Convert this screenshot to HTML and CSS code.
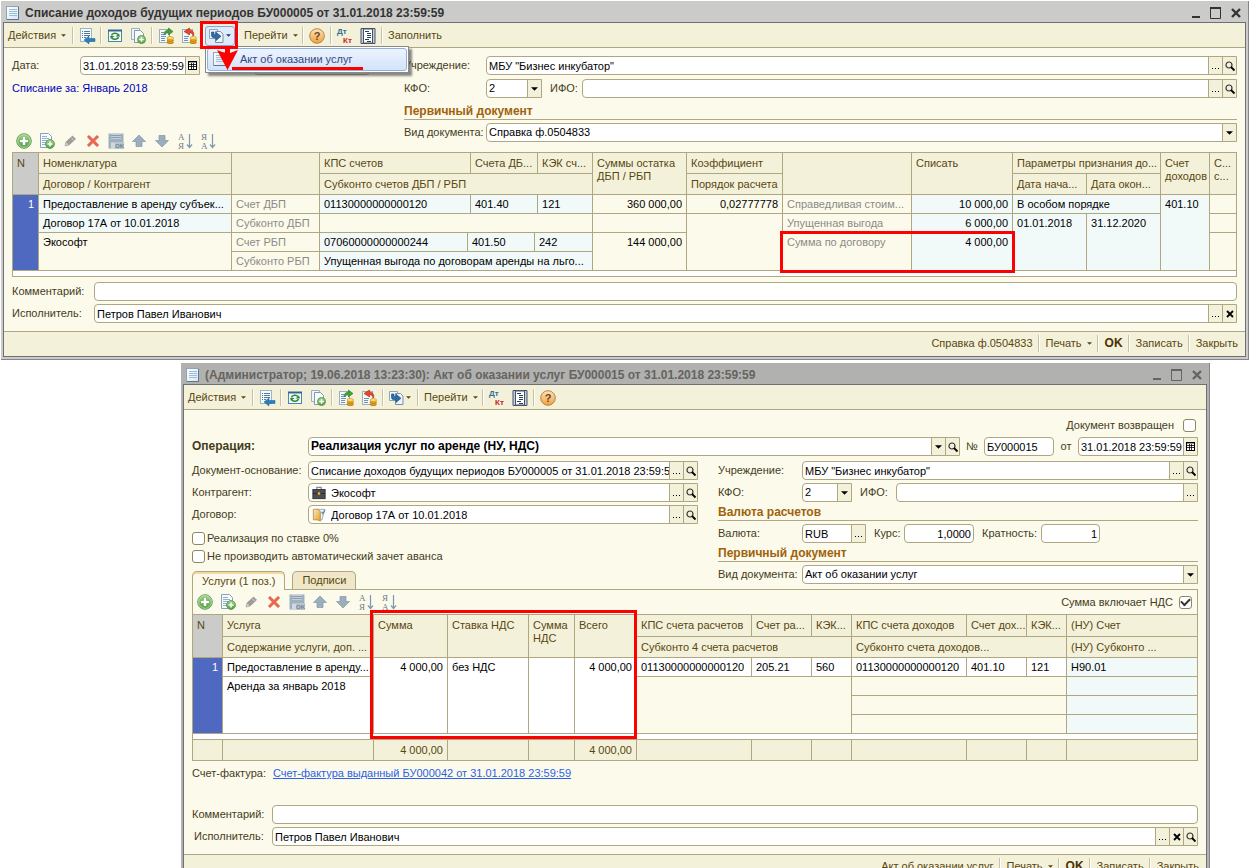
FILE: index.html
```html
<!DOCTYPE html>
<html lang="ru">
<head>
<meta charset="utf-8">
<title>Списание доходов будущих периодов</title>
<link rel="stylesheet" href="styles.css">
</head>
<body>
<svg class="sprite" aria-hidden="true">
  <defs>
    <linearGradient id="g-green" x1="0" y1="0" x2="0" y2="1"><stop offset="0" stop-color="#a5d68a"/><stop offset="1" stop-color="#4f9f3d"/></linearGradient>
    <linearGradient id="g-orange" x1="0" y1="0" x2="0" y2="1"><stop offset="0" stop-color="#fde3bd"/><stop offset="1" stop-color="#f0a040"/></linearGradient>
    <linearGradient id="g-sheet" x1="0" y1="0" x2="1" y2="1"><stop offset="0" stop-color="#ffffff"/><stop offset="1" stop-color="#d5e6f2"/></linearGradient>
    <linearGradient id="g-fold" x1="0" y1="0" x2="1" y2="1"><stop offset="0" stop-color="#fdeab5"/><stop offset="1" stop-color="#e0a030"/></linearGradient>
  </defs>
  <symbol id="doc" viewBox="0 0 14 14"><rect x=".5" y=".5" width="12" height="13" fill="url(#g-sheet)" stroke="#8fa6ba"/><path d="M3 3.5h8M3 5.5h8M3 7.5h8M3 9.5h8" stroke="#9dbdd8"/><path d="M12.5 1v12.5H1" fill="none" stroke="#5d7690"/></symbol>
  <symbol id="goto" viewBox="0 0 16 16"><rect x="1.500" y=".5" width="11" height="13" fill="#f5fafd" stroke="#9fb4c4"/><path d="M3 3.500h1M5 3.500h6M3 5.500h1M5 5.500h6M3 7.500h1M5 7.500h6M3 9.500h1M5 9.500h2" stroke="#54789a"/><path d="M16 10.500v3h-6V16l-5-4 5-4v2.500z" fill="#2c7fb8" stroke="#1c5f92" stroke-width=".5"/></symbol>
  <symbol id="refresh" viewBox="0 0 16 16"><rect x="1.500" y="2.500" width="13" height="11" fill="#f4f9fc" stroke="#5383a6"/><path d="M1 2.500h14" stroke="#33678f" stroke-width="2"/><path d="M4.500 7.500a3.600 2.800 0 0 1 6.500-1M11.500 9a3.600 2.800 0 0 1-6.500 1" fill="none" stroke="#2f8a35" stroke-width="1.600"/><path d="M13 8.500H8.500L12 5.500zM3 8h4.500L4 11z" fill="#2f8a35"/></symbol>
  <symbol id="copy" viewBox="0 0 16 16"><path d="M1.500.5h8v11h-8z" fill="#eef4f8" stroke="#9cb0bf"/><path d="M4.500 2.500h6l3 3v9h-9z" fill="#f8fbfd" stroke="#8399aa"/><circle cx="11.500" cy="11.500" r="4" fill="url(#g-green)" stroke="#5f9c55"/><path d="M11.500 9.200v4.600M9.200 11.500h4.600" stroke="#fff" stroke-width="1.500"/></symbol>
  <symbol id="post" viewBox="0 0 16 16"><rect x="1.500" y="1.500" width="10" height="13" fill="#f4f8fb" stroke="#9aafc0"/><path d="M3 4.500h3M3 6.500h5M3 8.500h5M3 10.500h4M3 12.500h4" stroke="#7093b2"/><path d="M6 6.500C6 3.500 8 2 10.500 2V0L15 3.500 10.500 7V5C9 5 7.500 5.200 6 6.500z" fill="#42a038" stroke="#2a7b25" stroke-width=".6"/><path d="M9 10v4.500c0 2 6.500 2 6.500 0V10z" fill="#e9a922"/><path d="M9 12c0 1.800 6.500 1.800 6.500 0M9 14c0 1.800 6.500 1.800 6.500 0" fill="none" stroke="#a96f0a" stroke-width=".8"/><ellipse cx="12.250" cy="10" rx="3.250" ry="1.500" fill="#ffe07a" stroke="#c18a16" stroke-width=".6"/></symbol>
  <symbol id="unpost" viewBox="0 0 16 16"><rect x="1.500" y="1.500" width="10" height="13" fill="#f4f8fb" stroke="#9aafc0"/><path d="M3 8.500h5M3 10.500h4M3 12.500h4" stroke="#7093b2"/><path d="M12.500 8C13.500 4 11.500 2.300 8.500 2.300V0L3 3.500 8.500 7V4.800c2 0 3.300.7 4 3.200z" fill="#e5452e" stroke="#b52413" stroke-width=".6"/><path d="M9 10v4.500c0 2 6.500 2 6.500 0V10z" fill="#e9a922"/><path d="M9 12c0 1.800 6.500 1.800 6.500 0M9 14c0 1.800 6.500 1.800 6.500 0" fill="none" stroke="#a96f0a" stroke-width=".8"/><ellipse cx="12.250" cy="10" rx="3.250" ry="1.500" fill="#ffe07a" stroke="#c18a16" stroke-width=".6"/></symbol>
  <symbol id="based" viewBox="0 0 16 16"><path d="M1.500 1.500h8v9h-8z" fill="#f2f7fb" stroke="#8fa5b8"/><path d="M7.500 3.500h5l2.500 2.500v8.500H7.500z" fill="#eef4fa" stroke="#7890a6"/><path d="M3.500 4v3.500c0 1.800 1.500 2.500 4.500 2.500v2.500l5-4.200L8 4.300v2.500c-1.500 0-2-.3-2-1V4z" fill="#2d6ea8" stroke="#174a7c" stroke-width=".6"/></symbol>
  <symbol id="help" viewBox="0 0 16 16"><circle cx="8" cy="8" r="7.300" fill="url(#g-orange)" stroke="#b9853f"/><text x="8" y="12" text-anchor="middle" class="ic-q">?</text></symbol>
  <symbol id="dtkt" viewBox="0 0 16 16"><text x="0" y="6" class="ic-dt">Дт</text><text x="6" y="15" class="ic-kt">Кт</text></symbol>
  <symbol id="report" viewBox="0 0 16 16"><path d="M1 .5h14v15H1z" fill="#c5cfda" stroke="#45536a"/><path d="M3.500 1v14h9V1z" fill="#fff" stroke="#45536a"/><path d="M5 3.500h4M7 5.500h4M7 7.500h4M7 9.500h4M5 11.500h4M7 13.500h4" stroke="#26405e"/></symbol>
  <symbol id="add" viewBox="0 0 16 16"><circle cx="8" cy="8" r="7.300" fill="url(#g-green)" stroke="#6d9f65"/><circle cx="8" cy="8" r="6.300" fill="none" stroke="#c6e6b6" stroke-width=".7"/><path d="M8 4v8M4 8h8" stroke="#5a9a4c" stroke-width="4"/><path d="M8 4v8M4 8h8" stroke="#fff" stroke-width="2.600"/></symbol>
  <symbol id="adddoc" viewBox="0 0 16 16"><path d="M1.500.5h8l3 3v11h-11z" fill="#f6fafd" stroke="#8ba2b5"/><path d="M3 3.500h5M3 5.500h7M3 7.500h5M3 9.500h4M3 11.500h4" stroke="#8fb2cf"/><circle cx="11" cy="11" r="4.400" fill="url(#g-green)" stroke="#5f9c55"/><path d="M11 8.500v5M8.500 11h5" stroke="#fff" stroke-width="1.600"/></symbol>
  <symbol id="pencil" viewBox="0 0 16 16"><path d="M3 13l1-4 6.500-6 3 3L7 12z" fill="#9d9d99" stroke="#83837f" stroke-width=".6"/><path d="M3 13l1-4 3 3z" fill="#c9c9c4"/><path d="M9 4.500l3 3" stroke="#d6d6d2"/></symbol>
  <symbol id="del" viewBox="0 0 16 16"><path d="M4 2.500l4 4 4-4 1.500 1.500-4 4 4 4-1.500 1.500-4-4-4 4L2.500 12l4-4-4-4z" fill="#ee6a50" stroke="#d8402c" stroke-width=".8"/></symbol>
  <symbol id="saveok" viewBox="0 0 16 16"><path d="M.5.5h15v15H.5z" fill="#9fb0be"/><path d="M3 1h10v5H3z" fill="#c4d0d9"/><path d="M3 2.500h10M3 4.500h10" stroke="#8b9eae"/><path d="M3 9.500h4V15H3z" fill="#cfd9e0"/><rect x="7" y="9" width="9" height="7" fill="#b9c5ce"/><text x="7" y="15" class="ic-ok">OK</text></symbol>
  <symbol id="up" viewBox="0 0 16 16"><path d="M8 2l6.500 6.500H11V13.500H5V8.500H1.500z" fill="#9caebd" stroke="#8397a8" stroke-width=".7"/></symbol>
  <symbol id="down" viewBox="0 0 16 16"><path d="M8 14l6.500-6.500H11V2.500H5v5H1.500z" fill="#9caebd" stroke="#8397a8" stroke-width=".7"/></symbol>
  <symbol id="az" viewBox="0 0 16 16"><text x="1" y="7" class="ic-s">А</text><text x="1" y="16" class="ic-s">Я</text><path d="M12.500 1v13M10 11.500l2.500 3 2.500-3" fill="none" stroke="#7f98ad" stroke-width="1.200"/></symbol>
  <symbol id="za" viewBox="0 0 16 16"><text x="1" y="7" class="ic-s">Я</text><text x="1" y="16" class="ic-s">А</text><path d="M12.500 1v13M10 11.500l2.500 3 2.500-3" fill="none" stroke="#7f98ad" stroke-width="1.200"/></symbol>
  <symbol id="lens" viewBox="0 0 10 10"><circle cx="4" cy="4" r="3" fill="none" stroke="#333" stroke-width="1.200"/><path d="M6 6l3.500 3.500" stroke="#000" stroke-width="1.800"/></symbol>
  <symbol id="cal" viewBox="0 0 9 9"><rect x=".5" y=".5" width="8" height="8" fill="#fff" stroke="#000"/><path d="M0 1h9M1 3.500h7M1 5.500h7M3.500 2v7M5.500 2v7" stroke="#000" stroke-width=".8"/></symbol>
  <symbol id="cross" viewBox="0 0 8 8"><path d="M1 1l6 6M7 1L1 7" stroke="#000" stroke-width="1.800"/></symbol>
  <symbol id="dots" viewBox="0 0 8 8"><path d="M0 6.500h1M3 6.500h1M6 6.500h1" stroke="#000"/></symbol>
  <symbol id="tri" viewBox="0 0 8 4"><path d="M0 0h8L4 4z" fill="currentColor"/></symbol>
  <symbol id="case" viewBox="0 0 16 16"><path d="M5.500 4V1.500h5V4" fill="none" stroke="#8a8a86" stroke-width="1.400"/><rect x="1" y="4" width="14" height="10.500" fill="#4d4e52" stroke="#2c2d30"/><path d="M1 8.500h14" stroke="#2a2a2c"/><path d="M8 6.500l1.800 2L8 10.500l-1.800-2z" fill="#f4ae34"/></symbol>
  <symbol id="folder" viewBox="0 0 16 16"><path d="M5.500 1.500h9l-3 12h-6z" fill="#e7eff7" stroke="#8fa6bf"/><path d="M11 4.500l1.500 2L15 2" fill="none" stroke="#5a7da8" stroke-width="1.200"/><path d="M1.500 1.500h5l3 2.500v11l-3-1.500h-5z" fill="url(#g-fold)" stroke="#c18e34"/></symbol>
  <symbol id="min" viewBox="0 0 12 12"><path d="M2 10h8" stroke="currentColor" stroke-width="2"/></symbol>
  <symbol id="max" viewBox="0 0 12 12"><path d="M.5 1v10.500h10V1" fill="none" stroke="currentColor"/><path d="M0 1h11" stroke="currentColor" stroke-width="2"/></symbol>
  <symbol id="close" viewBox="0 0 12 12"><path d="M2 2l8 8M10 2l-8 8" stroke="currentColor" stroke-width="2.400"/></symbol>
</svg>

<section class="win">
  <header class="title">
    <svg class="i14"><use href="#doc"/></svg>
    <h1>Списание доходов будущих периодов БУ000005 от 31.01.2018 23:59:59</h1>
    <button aria-label="Свернуть"><svg class="i12"><use href="#min"/></svg></button>
    <button aria-label="Развернуть"><svg class="i12"><use href="#max"/></svg></button>
    <button aria-label="Закрыть окно"><svg class="i12"><use href="#close"/></svg></button>
  </header>
  <nav class="bar">
    <button class="word first">Действия<svg class="caret"><use href="#tri"/></svg></button><i class="sep"></i>
    <button class="ib" aria-label="Найти в списке"><svg class="i16"><use href="#goto"/></svg></button><i class="sep"></i>
    <button class="ib" aria-label="Обновить"><svg class="i16"><use href="#refresh"/></svg></button>
    <button class="ib" aria-label="Скопировать"><svg class="i16"><use href="#copy"/></svg></button><i class="sep"></i>
    <button class="ib" aria-label="Провести"><svg class="i16"><use href="#post"/></svg></button>
    <button class="ib" aria-label="Отмена проведения"><svg class="i16"><use href="#unpost"/></svg></button><i class="sep"></i>
    <div class="split">
      <button class="ib wide active" aria-label="Ввести на основании"><svg class="i16"><use href="#based"/></svg><svg class="caret"><use href="#tri"/></svg></button>
      <div class="menu"><button class="item"><svg class="i14"><use href="#doc"/></svg>Акт об оказании услуг</button></div>
      <span class="mark mark-split"></span>
      <svg class="arrow" viewBox="0 0 22 24"><path d="M8 0h5v6l8-3L10.500 23 0 3l8 3z" fill="#f00"/></svg>
      <span class="underline"></span>
    </div><i class="sep"></i>
    <button class="word">Перейти<svg class="caret"><use href="#tri"/></svg></button><i class="sep"></i>
    <button class="ib" aria-label="Справка"><svg class="i16"><use href="#help"/></svg></button><i class="sep"></i>
    <button class="ib" aria-label="Проводки"><svg class="i16"><use href="#dtkt"/></svg></button>
    <button class="ib" aria-label="Отчет"><svg class="i16"><use href="#report"/></svg></button><i class="sep"></i>
    <button class="word">Заполнить</button>
  </nav>
  <div class="body">
    <div class="cols-a">
      <div>
        <div class="row">
          <label class="l68" for="a-date">Дата:</label>
          <div class="field w120"><input id="a-date" value="31.01.2018 23:59:59"><button aria-label="Календарь"><svg class="i9"><use href="#cal"/></svg></button></div>
          <label class="l54" for="a-num">Номер:</label>
          <div class="field solo w116"><input id="a-num"></div>
        </div>
        <div class="row period">Списание за: Январь 2018</div>
        <div class="icons spaced">
          <button class="ib" aria-label="Добавить"><svg class="i16"><use href="#add"/></svg></button>
          <button class="ib" aria-label="Добавить копированием"><svg class="i16"><use href="#adddoc"/></svg></button>
          <button class="ib" aria-label="Изменить"><svg class="i16"><use href="#pencil"/></svg></button>
          <button class="ib" aria-label="Удалить"><svg class="i16"><use href="#del"/></svg></button>
          <button class="ib" aria-label="Закончить редактирование"><svg class="i16"><use href="#saveok"/></svg></button>
          <button class="ib" aria-label="Вверх"><svg class="i16"><use href="#up"/></svg></button>
          <button class="ib" aria-label="Вниз"><svg class="i16"><use href="#down"/></svg></button>
          <button class="ib" aria-label="По возрастанию"><svg class="i16"><use href="#az"/></svg></button>
          <button class="ib" aria-label="По убыванию"><svg class="i16"><use href="#za"/></svg></button>
        </div>
      </div>
      <div>
        <div class="row">
          <label class="l82" for="a-org">Учреждение:</label>
          <div class="field grow"><input id="a-org" value="МБУ &quot;Бизнес инкубатор&quot;"><button aria-label="Выбрать"><svg class="i8"><use href="#dots"/></svg></button><button aria-label="Открыть"><svg class="i10"><use href="#lens"/></svg></button></div>
        </div>
        <div class="row">
          <label class="l82" for="a-kfo">КФО:</label>
          <div class="field w56"><select id="a-kfo"><option>2</option></select><span class="cap"><svg class="tri"><use href="#tri"/></svg></span></div>
          <label class="l40" for="a-ifo">ИФО:</label>
          <div class="field grow"><input id="a-ifo"><button aria-label="Выбрать"><svg class="i8"><use href="#dots"/></svg></button><button aria-label="Открыть"><svg class="i10"><use href="#lens"/></svg></button></div>
        </div>
        <h2>Первичный документ</h2>
        <div class="row">
          <label class="l82" for="a-kind">Вид документа:</label>
          <div class="field grow"><select id="a-kind"><option>Справка ф.0504833</option></select><span class="cap"><svg class="tri"><use href="#tri"/></svg></span></div>
        </div>
      </div>
    </div>
    <div class="sheet sheet-a">
      <table>
        <colgroup><col class="c26"><col class="c193"><col class="c88"><col class="c148"><col class="c3"><col class="c64"><col class="c3"><col class="c55"><col class="c94"><col class="c96"><col class="c129"><col class="c101"><col class="c74"><col class="c74"><col class="c49"><col class="c26"></colgroup>
        <thead>
          <tr><th rowspan="2" class="n">N</th><th>Номенклатура</th><th rowspan="2"></th><th colspan="2">КПС счетов</th><th colspan="2">Счета ДБ...</th><th>КЭК сч...</th><th rowspan="2">Суммы остатка<br>ДБП / РБП</th><th>Коэффициент</th><th rowspan="2"></th><th rowspan="2">Списать</th><th colspan="2">Параметры признания до...</th><th rowspan="2">Счет<br>доходов</th><th rowspan="2">С...<br>с...</th></tr>
          <tr><th>Договор / Контрагент</th><th colspan="5">Субконто счетов ДБП / РБП</th><th>Порядок расчета</th><th>Дата нача...</th><th>Дата окон...</th></tr>
        </thead>
        <tbody>
          <tr><td rowspan="4" class="sel">1</td><td class="b">Предоставление в аренду субъек...</td><td class="g">Счет ДБП</td><td colspan="2" class="b">01130000000000120</td><td colspan="2" class="b">401.40</td><td class="b">121</td><td class="r">360 000,00</td><td class="r">0,02777778</td><td class="g">Справедливая стоим...</td><td class="b r">10 000,00</td><td colspan="2" class="b">В особом порядке</td><td rowspan="4" class="b">401.10</td><td></td></tr>
          <tr><td class="b">Договор 17А от 10.01.2018</td><td class="g">Субконто ДБП</td><td colspan="5"></td><td></td><td rowspan="3"></td><td class="g">Упущенная выгода</td><td class="b r">6 000,00</td><td rowspan="3" class="b">01.01.2018</td><td rowspan="3" class="b">31.12.2020</td><td></td></tr>
          <tr><td rowspan="2">Экософт</td><td class="g">Счет РБП</td><td class="b">07060000000000244</td><td colspan="2" class="b">401.50</td><td colspan="2" class="b">242</td><td rowspan="2" class="r">144 000,00</td><td rowspan="2" class="g">Сумма по договору</td><td rowspan="2" class="b r">4 000,00</td><td rowspan="2"></td></tr>
          <tr><td class="g">Субконто РБП</td><td colspan="5" class="b">Упущенная выгода по договорам аренды на льго...</td></tr>
        </tbody>
      </table>
      <span class="mark mark-a"></span>
    </div>
    <div class="tail-a">
      <div class="row">
        <label class="l82" for="a-note">Комментарий:</label>
        <div class="field solo grow"><input id="a-note"></div>
      </div>
      <div class="row">
        <label class="l82" for="a-user">Исполнитель:</label>
        <div class="field grow"><input id="a-user" value="Петров Павел Иванович"><button aria-label="Выбрать"><svg class="i8"><use href="#dots"/></svg></button><button aria-label="Очистить"><svg class="i8"><use href="#cross"/></svg></button></div>
      </div>
    </div>
  </div>
  <footer class="foot">
    <button>Справка ф.0504833</button><i class="sep"></i><button>Печать<svg class="caret"><use href="#tri"/></svg></button><i class="sep"></i><button class="ok">OK</button><i class="sep"></i><button>Записать</button><i class="sep"></i><button>Закрыть</button>
  </footer>
</section>

<section class="win back">
  <header class="title">
    <svg class="i14"><use href="#doc"/></svg>
    <h1>(Администратор; 19.06.2018 13:23:30): Акт об оказании услуг БУ000015 от 31.01.2018 23:59:59</h1>
    <button aria-label="Свернуть"><svg class="i12"><use href="#min"/></svg></button>
    <button aria-label="Развернуть"><svg class="i12"><use href="#max"/></svg></button>
    <button aria-label="Закрыть окно"><svg class="i12"><use href="#close"/></svg></button>
  </header>
  <nav class="bar">
    <button class="word first">Действия<svg class="caret"><use href="#tri"/></svg></button><i class="sep"></i>
    <button class="ib" aria-label="Найти в списке"><svg class="i16"><use href="#goto"/></svg></button><i class="sep"></i>
    <button class="ib" aria-label="Обновить"><svg class="i16"><use href="#refresh"/></svg></button>
    <button class="ib" aria-label="Скопировать"><svg class="i16"><use href="#copy"/></svg></button><i class="sep"></i>
    <button class="ib" aria-label="Провести"><svg class="i16"><use href="#post"/></svg></button>
    <button class="ib" aria-label="Отмена проведения"><svg class="i16"><use href="#unpost"/></svg></button><i class="sep"></i>
    <button class="ib wide" aria-label="Ввести на основании"><svg class="i16"><use href="#based"/></svg><svg class="caret"><use href="#tri"/></svg></button><i class="sep"></i>
    <button class="word">Перейти<svg class="caret"><use href="#tri"/></svg></button><i class="sep"></i>
    <button class="ib" aria-label="Проводки"><svg class="i16"><use href="#dtkt"/></svg></button>
    <button class="ib" aria-label="Отчет"><svg class="i16"><use href="#report"/></svg></button><i class="sep"></i>
    <button class="ib" aria-label="Справка"><svg class="i16"><use href="#help"/></svg></button>
  </nav>
  <div class="body">
    <div class="returned"><label for="b-ret">Документ возвращен</label><input type="checkbox" id="b-ret"></div>
    <div class="row head">
      <label class="l116 strong" for="b-op">Операция:</label>
      <div class="field grow strong"><select id="b-op"><option>Реализация услуг по аренде (НУ, НДС)</option></select><span class="cap"><svg class="tri"><use href="#tri"/></svg></span><button aria-label="Открыть"><svg class="i10"><use href="#lens"/></svg></button></div>
      <label class="l24" for="b-num">№</label>
      <div class="field solo w70"><input id="b-num" value="БУ000015"></div>
      <label class="l24" for="b-date">от</label>
      <div class="field w120"><input id="b-date" value="31.01.2018 23:59:59"><button aria-label="Календарь"><svg class="i9"><use href="#cal"/></svg></button></div>
    </div>
    <div class="cols-b">
      <div class="left">
        <div class="row">
          <label class="l116" for="b-base">Документ-основание:</label>
          <div class="field grow"><input id="b-base" value="Списание доходов будущих периодов БУ000005 от 31.01.2018 23:59:59"><button aria-label="Выбрать"><svg class="i8"><use href="#dots"/></svg></button><button aria-label="Открыть"><svg class="i10"><use href="#lens"/></svg></button></div>
        </div>
        <div class="row">
          <label class="l116" for="b-agent">Контрагент:</label>
          <div class="field grow"><svg class="i14 pre"><use href="#case"/></svg><input id="b-agent" value="Экософт"><button aria-label="Выбрать"><svg class="i8"><use href="#dots"/></svg></button><button aria-label="Открыть"><svg class="i10"><use href="#lens"/></svg></button></div>
        </div>
        <div class="row">
          <label class="l116" for="b-deal">Договор:</label>
          <div class="field grow"><svg class="i14 pre"><use href="#folder"/></svg><input id="b-deal" value="Договор 17А от 10.01.2018"><button aria-label="Выбрать"><svg class="i8"><use href="#dots"/></svg></button><button aria-label="Открыть"><svg class="i10"><use href="#lens"/></svg></button></div>
        </div>
        <div class="checks">
          <div><input type="checkbox" id="b-zero"><label for="b-zero">Реализация по ставке 0%</label></div>
          <div><input type="checkbox" id="b-auto"><label for="b-auto">Не производить автоматический зачет аванса</label></div>
        </div>
        <div class="tabs"><button class="tab on">Услуги (1 поз.)</button><button class="tab">Подписи</button></div>
      </div>
      <div>
        <div class="row">
          <label class="l84" for="b-org">Учреждение:</label>
          <div class="field grow"><input id="b-org" value="МБУ &quot;Бизнес инкубатор&quot;"><button aria-label="Выбрать"><svg class="i8"><use href="#dots"/></svg></button><button aria-label="Открыть"><svg class="i10"><use href="#lens"/></svg></button></div>
        </div>
        <div class="row">
          <label class="l84" for="b-kfo">КФО:</label>
          <div class="field w50"><select id="b-kfo"><option>2</option></select><span class="cap"><svg class="tri"><use href="#tri"/></svg></span></div>
          <label class="l44" for="b-ifo">ИФО:</label>
          <div class="field grow"><input id="b-ifo"><button aria-label="Выбрать"><svg class="i8"><use href="#dots"/></svg></button></div>
        </div>
        <h2>Валюта расчетов</h2>
        <div class="row">
          <label class="l84" for="b-cur">Валюта:</label>
          <div class="field w64"><input id="b-cur" value="RUB"><button aria-label="Выбрать"><svg class="i8"><use href="#dots"/></svg></button></div>
          <label class="l38" for="b-rate">Курс:</label>
          <div class="field solo w70 num"><input id="b-rate" value="1,0000"></div>
          <label class="l67" for="b-mult">Кратность:</label>
          <div class="field solo w59 num"><input id="b-mult" value="1"></div>
        </div>
        <h2>Первичный документ</h2>
        <div class="row">
          <label class="l84" for="b-kind">Вид документа:</label>
          <div class="field grow"><select id="b-kind"><option>Акт об оказании услуг</option></select><span class="cap"><svg class="tri"><use href="#tri"/></svg></span></div>
        </div>
      </div>
    </div>
    <div class="panel">
      <div class="panel-bar">
        <div class="icons">
          <button class="ib" aria-label="Добавить"><svg class="i16"><use href="#add"/></svg></button>
          <button class="ib" aria-label="Добавить копированием"><svg class="i16"><use href="#adddoc"/></svg></button>
          <button class="ib" aria-label="Изменить"><svg class="i16"><use href="#pencil"/></svg></button>
          <button class="ib" aria-label="Удалить"><svg class="i16"><use href="#del"/></svg></button>
          <button class="ib" aria-label="Закончить редактирование"><svg class="i16"><use href="#saveok"/></svg></button>
          <button class="ib" aria-label="Вверх"><svg class="i16"><use href="#up"/></svg></button>
          <button class="ib" aria-label="Вниз"><svg class="i16"><use href="#down"/></svg></button>
          <button class="ib" aria-label="По возрастанию"><svg class="i16"><use href="#az"/></svg></button>
          <button class="ib" aria-label="По убыванию"><svg class="i16"><use href="#za"/></svg></button>
        </div>
        <div class="vat"><label for="b-vat">Сумма включает НДС</label><input type="checkbox" id="b-vat" checked></div>
      </div>
      <div class="sheet sheet-b">
        <table>
          <colgroup><col class="c30"><col class="c151"><col class="c74"><col class="c81"><col class="c46"><col class="c62"><col class="c115"><col class="c60"><col class="c40"><col class="c115"><col class="c60"><col class="c40"><col class="c130"></colgroup>
          <thead>
            <tr><th rowspan="2" class="n">N</th><th>Услуга</th><th rowspan="2">Сумма</th><th rowspan="2">Ставка НДС</th><th rowspan="2">Сумма<br>НДС</th><th rowspan="2">Всего</th><th>КПС счета расчетов</th><th>Счет ра...</th><th>КЭК...</th><th>КПС счета доходов</th><th>Счет дох...</th><th>КЭК...</th><th>(НУ) Счет</th></tr>
            <tr><th>Содержание услуги, доп. ...</th><th colspan="3">Субконто 4 счета расчетов</th><th colspan="3">Субконто счета доходов...</th><th>(НУ) Субконто ...</th></tr>
          </thead>
          <tbody>
            <tr><td rowspan="4" class="sel">1</td><td class="w">Предоставление в аренду...</td><td rowspan="4" class="w r">4 000,00</td><td rowspan="4" class="w">без НДС</td><td rowspan="4" class="w"></td><td rowspan="4" class="w r">4 000,00</td><td class="w">01130000000000120</td><td class="w">205.21</td><td class="w">560</td><td class="w">01130000000000120</td><td class="w">401.10</td><td class="w">121</td><td class="b">Н90.01</td></tr>
            <tr><td rowspan="3" class="w">Аренда за январь 2018</td><td rowspan="3" colspan="3"></td><td colspan="3"></td><td class="b"></td></tr>
            <tr><td colspan="3"></td><td class="b"></td></tr>
            <tr><td colspan="3"></td><td class="b"></td></tr>
            <tr class="gap"><td colspan="13" class="w"></td></tr>
          </tbody>
          <tfoot>
            <tr><td></td><td></td><td class="r">4 000,00</td><td></td><td></td><td class="r">4 000,00</td><td></td><td></td><td></td><td></td><td></td><td></td><td></td></tr>
          </tfoot>
        </table>
        <span class="mark mark-b"></span>
      </div>
    </div>
    <div class="row invoice"><span class="l81">Счет-фактура:</span><a href="#invoice">Счет-фактура выданный БУ000042 от 31.01.2018 23:59:59</a></div>
    <div class="row">
      <label class="l80" for="b-note">Комментарий:</label>
      <div class="field solo grow"><input id="b-note"></div>
    </div>
    <div class="row">
      <label class="l80 inset" for="b-user">Исполнитель:</label>
      <div class="field grow"><input id="b-user" value="Петров Павел Иванович"><button aria-label="Выбрать"><svg class="i8"><use href="#dots"/></svg></button><button aria-label="Очистить"><svg class="i8"><use href="#cross"/></svg></button><button aria-label="Открыть"><svg class="i10"><use href="#lens"/></svg></button></div>
    </div>
  </div>
  <footer class="foot">
    <button>Акт об оказании услуг</button><i class="sep"></i><button>Печать<svg class="caret"><use href="#tri"/></svg></button><i class="sep"></i><button class="ok">OK</button><i class="sep"></i><button>Записать</button><i class="sep"></i><button>Закрыть</button>
  </footer>
</section>
</body>
</html>
```
FILE: styles.css
```css
:root {
  --line: #aea782;
  --cream: #fcfaeb;
  --bar: #f4f1db;
  --blue: #f1f9f9;
  --brown: #58470f;
}
* { box-sizing: border-box; }
html { height: 100%; }
body {
  margin: 0;
  padding-top: 1px;
  height: 100vh;
  overflow: hidden;
  background: #fff;
  font: 11px/13px "Liberation Sans", Arial, sans-serif;
  color: #443c1c;
}
.sprite { position: absolute; width: 0; height: 0; }
svg { display: block; flex: none; overflow: visible; }
symbol { overflow: visible; }
button, input, select { font: inherit; color: inherit; margin: 0; }
button { border: 0; padding: 0; background: none; white-space: nowrap; }

.i8 { width: 8px; height: 8px; }
.i9 { width: 9px; height: 9px; }
.i10 { width: 10px; height: 10px; }
.i12 { width: 12px; height: 12px; }
.i14 { width: 14px; height: 14px; }
.i16 { width: 16px; height: 16px; }
.tri { width: 7px; height: 4px; color: #000; }
.caret { width: 5px; height: 3px; margin-left: 5px; }
.ic-q { font: bold 11px "Liberation Sans", sans-serif; fill: #6b4a1c; }
.ic-dt { font: bold 8px "Liberation Sans", sans-serif; fill: #2f6f94; }
.ic-kt { font: bold 8px "Liberation Sans", sans-serif; fill: #c8281c; }
.ic-ok { font: bold 6px "Liberation Sans", sans-serif; fill: #6f8494; }
.ic-s { font: 9px "Liberation Serif", serif; fill: #6f7f8c; }

/* window frame */
.win {
  margin-left: 1px;
  padding: 0 2px 2px;
  background: #cbcbc9;
  border-right: 1px solid #85858a;
  border-bottom: 1px solid #85858a;
}
.win.back { margin: 3px 39px 0 181px; background: #b1b1b0; }
.title {
  display: flex;
  align-items: center;
  gap: 8px;
  height: 21px;
  padding: 2px 4px 0 3px;
  color: #333;
}
.back .title { color: #66645f; }
.title h1 { flex: 1; margin: 0 0 0 -3px; font: bold 12px/16px "Liberation Sans", Arial, sans-serif; white-space: nowrap; overflow: hidden; }
.bar, .body, .foot { border: solid #6f6f78; border-width: 0 1px; }
.bar {
  display: flex;
  align-items: center;
  border-top-width: 1px;
  height: 26px;
  background: var(--bar);
  box-shadow: inset 0 -1px var(--line);
  color: var(--brown);
}
.body { padding: 8px; background: var(--cream); }
.foot {
  display: flex;
  align-items: center;
  justify-content: flex-end;
  height: 26px;
  padding-right: 6px;
  background: var(--bar);
  border-bottom-width: 1px;
  box-shadow: inset 0 1px var(--line);
  color: var(--brown);
}
.foot button { display: flex; align-items: center; padding: 0 1px; }
.foot .sep { margin: 0 5px 0 4px; }
.foot .ok { font-weight: bold; font-size: 12px; color: #4a3000; }
.sep { flex: none; width: 2px; height: 17px; margin: 0 1px 0 2px; background: #c9c29f; border-right: 1px solid #fff; }
.word { display: flex; align-items: center; width: 60px; padding-left: 4px; }
.word.first { width: 66px; }
.ib { display: flex; align-items: center; justify-content: center; flex: none; width: 23px; height: 20px; }
.ib.wide { width: 30px; justify-content: flex-start; padding-left: 3px; }
.ib .caret { margin-left: 2px; }
.ib.active { border: 1px solid #86a3d6; border-radius: 3px; background: #dfeafb; padding-left: 2px; color: #1f3a7a; }

/* menu and annotations */
.split { position: relative; z-index: 2; }
.menu {
  position: absolute;
  top: 20px;
  left: 0;
  padding: 1px;
  width: 204px;
  background: #fff;
  border: 1px solid #8b8b85;
  box-shadow: 3px 3px 2px rgba(60, 60, 60, .6);
}
.item {
  display: flex;
  align-items: center;
  gap: 13px;
  width: 100%;
  height: 23px;
  padding-left: 5px;
  border: 1px solid #8fb0e2;
  border-radius: 3px;
  background: linear-gradient(#edf4fe, #d3e3fa);
  color: #35477c;
}
.mark { position: absolute; border: 3px solid #f00; pointer-events: none; }
.mark-split { left: -5px; top: -5px; width: 38px; height: 28px; }
.arrow { position: absolute; left: 12px; top: 21px; width: 22px; height: 24px; }
.underline { position: absolute; left: 27px; top: 41px; width: 131px; height: 3px; background: #f00; }
.mark-a { left: 767px; top: 78px; width: 235px; height: 42px; }
.mark-b { left: 177px; top: -5px; width: 267px; height: 129px; }

/* form rows */
.row { display: flex; align-items: center; height: 19px; margin-bottom: 3px; }
.row > label, .row > span { flex: none; white-space: nowrap; }
.row:last-child { margin-bottom: 0; }
.cols-a .row:not(:last-child) { margin-bottom: 4px; }
.cols-a { display: grid; grid-template-columns: 392px minmax(0, 1fr); align-items: start; }
.period { color: #0000b8; }
.icons { display: flex; }
.spaced { margin: 34px 0 2px; height: 18px; align-items: center; }
.l24 { width: 24px; text-align: center; }
.l38 { width: 38px; padding-left: 8px; }
.l40 { width: 40px; padding-left: 8px; }
.l44 { width: 44px; padding-left: 8px; }
.l54 { width: 54px; padding-left: 8px; }
.l67 { width: 67px; padding-left: 8px; }
.l68 { width: 68px; }
.l80 { width: 80px; }
.l81 { width: 81px; }
.l82 { width: 82px; }
.l84 { width: 84px; }
.l116 { width: 116px; }
.inset { padding-left: 2px; }
.field {
  display: flex;
  flex: none;
  height: 19px;
  min-width: 0;
  border: 1px solid var(--line);
  border-radius: 4px 0 0 4px;
  background: #fff;
  color: #000;
  overflow: hidden;
}
.field.solo { border-radius: 4px; }
.field.grow { flex: 1; }
.w50 { width: 50px; }
.w56 { width: 56px; }
.w59 { width: 59px; }
.w64 { width: 64px; }
.w70 { width: 70px; }
.w116 { width: 116px; }
.w120 { width: 120px; }
.field input, .field select {
  flex: 1;
  min-width: 0;
  width: 0;
  height: 17px;
  padding: 0 0 0 2px;
  border: 0;
  outline: 0;
  background: none;
  appearance: none;
}
.field.num input { padding-right: 2px; text-align: right; }
.field button, .cap {
  display: flex;
  align-items: center;
  justify-content: center;
  flex: none;
  width: 14px;
  border-left: 1px solid var(--line);
  background: var(--bar);
}
.pre { align-self: center; margin: 0 3px; }
.strong { font-weight: bold; font-size: 12px; }
.strong.field { color: #000; }
h2 {
  margin: 0 0 3px;
  height: 16px;
  border-bottom: 1px solid var(--line);
  font: bold 12px/14px "Liberation Sans", Arial, sans-serif;
  color: #a0620c;
}
.cols-a h2 { height: 18px; padding-top: 2px; }

/* sheets */
.sheet { position: relative; border: 1px solid var(--line); background: #fff; }
.sheet-a { padding-bottom: 5px; }
.sheet-b { border-width: 1px 0 0; }
table { width: 100%; table-layout: fixed; border-collapse: separate; border-spacing: 0; }
th, td {
  height: 19px;
  padding: 3px 0 0 4px;
  border: solid var(--line);
  border-width: 0 1px 1px 0;
  background: var(--cream);
  font-weight: normal;
  text-align: left;
  vertical-align: top;
  white-space: nowrap;
  overflow: hidden;
  color: #000;
}
tr > :last-child { border-right-width: 0; }
th { height: 21px; padding-top: 4px; background: var(--bar); color: var(--brown); }
th.n { background: #cbcbc9; }
.sheet-a tbody tr:nth-child(4) > :last-child { border-right-width: 1px; }
td.b { background: var(--blue); }
td.w { background: #fff; }
td.g { color: #8b8b86; }
td.r { text-align: right; padding-right: 4px; }
td.sel { padding-right: 4px; background: #5069c0; color: #fff; text-align: right; }
.sheet-a thead tr:nth-child(2) > :last-child { border-right-width: 1px; }
.sheet-b thead tr:first-child th { height: 22px; }
.gap td { height: 6px; padding: 0; }
tfoot td { height: 20px; padding-top: 4px; background: var(--bar); border-bottom-width: 0; color: var(--brown); }
.c3 { width: 3px; } .c26 { width: 26px; } .c30 { width: 30px; } .c40 { width: 40px; }
.c46 { width: 46px; } .c49 { width: 49px; } .c55 { width: 55px; } .c60 { width: 60px; }
.c62 { width: 62px; } .c64 { width: 64px; } .c74 { width: 74px; } .c81 { width: 81px; }
.c88 { width: 88px; } .c94 { width: 94px; } .c96 { width: 96px; } .c101 { width: 101px; }
.c115 { width: 115px; } .c129 { width: 129px; } .c130 { width: 130px; } .c148 { width: 148px; }
.c151 { width: 151px; } .c193 { width: 193px; }
.tail-a { padding-top: 5px; }

/* second window */
input[type="checkbox"] {
  appearance: none;
  flex: none;
  display: grid;
  place-items: center;
  width: 13px;
  height: 13px;
  border: 1px solid #8e8765;
  border-radius: 3px;
  background: #fff;
}
input[type="checkbox"]:checked::before {
  content: "";
  width: 7px;
  height: 4px;
  margin-top: -2px;
  border: solid #333;
  border-width: 0 0 2px 2px;
  transform: rotate(-45deg);
}
.returned { display: flex; justify-content: flex-end; align-items: center; gap: 9px; height: 15px; margin-bottom: 4px; padding-right: 2px; }
.head { margin-bottom: 5px; }
.cols-b { display: grid; grid-template-columns: 506fr 480fr; column-gap: 20px; align-items: start; }
.cols-b > * { min-width: 0; }
.left { display: flex; flex-direction: column; }
.checks { display: flex; flex-direction: column; gap: 5px; padding-top: 5px; }
.checks > div { display: flex; align-items: center; gap: 2px; height: 13px; }
.tabs { display: flex; gap: 7px; margin: 8px 0 -1px; position: relative; z-index: 1; }
.tab {
  height: 18px;
  padding: 0 9px;
  border: 1px solid var(--line);
  border-bottom: 0;
  border-radius: 5px 5px 0 0;
  background: #efe7c8;
  color: var(--brown);
}
.tab.on { height: 19px; background: var(--cream); box-shadow: inset 0 2px #f6d9a2; }
.panel { border: 1px solid var(--line); }
.panel-bar { display: flex; justify-content: space-between; align-items: center; height: 24px; padding-right: 5px; }
.vat { display: flex; align-items: center; gap: 6px; }
.invoice { margin: 3px 0 22px; }
.invoice a { color: #2a62e8; }
```
